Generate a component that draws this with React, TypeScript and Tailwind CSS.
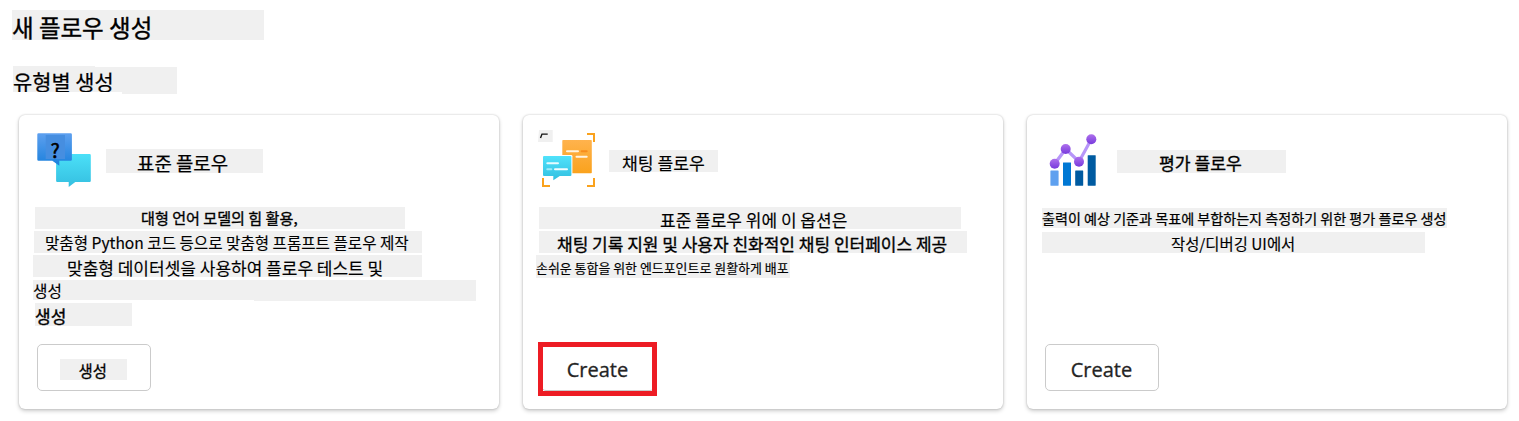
import type { ReactNode } from "react";

function Strip({ className, children }: { className: string; children?: ReactNode }) {
  return <div className={`whitespace-pre bg-[#f0f0f0] text-black ${className}`}>{children}</div>;
}

function StandardIcon() {
  return (
    <svg width="54" height="54" viewBox="0 0 54 54" className="block shrink-0">
      <defs>
        <linearGradient id="std-blue" x1="0" y1="0" x2="0" y2="1">
          <stop offset="0" stopColor="#5ea0ef" />
          <stop offset="1" stopColor="#1b80dc" />
        </linearGradient>
        <linearGradient id="std-cyan" x1="0" y1="0" x2="0" y2="1">
          <stop offset="0" stopColor="#4be0f8" />
          <stop offset="1" stopColor="#35bfe0" />
        </linearGradient>
      </defs>
      <path
        d="M20.3 21h32.3q1.2 0 1.2 1.2v25.6q0 1.2-1.2 1.2H38.3l-6.6 5V49H20.3q-1.2 0-1.2-1.2V22.2q0-1.2 1.2-1.2z"
        fill="url(#std-cyan)"
      />
      <path
        d="M1.5.2h32.2q1.2 0 1.2 1.2v25.2q0 1.2-1.2 1.2H22.3v5l-7-5H1.5q-1.2 0-1.2-1.2V1.4Q.3.2 1.5.2z"
        fill="url(#std-blue)"
      />
      <rect x="8.7" y="2" width="19.3" height="24" fill="#468ee0" />
      <text
        x="18"
        y="24.700"
        textAnchor="middle"
        fontSize="19.500"
        stroke="#000"
        strokeWidth="0.500"
        fontFamily="Noto Sans CJK KR, sans-serif"
      >
        ?
      </text>
    </svg>
  );
}

function ChatIcon() {
  return (
    <svg width="58" height="58" viewBox="0 0 58 58" className="block shrink-0">
      <defs>
        <linearGradient id="chat-orange" x1="0" y1="0" x2="0" y2="1">
          <stop offset="0" stopColor="#ffb34d" />
          <stop offset="1" stopColor="#faa21d" />
        </linearGradient>
        <linearGradient id="chat-cyan" x1="0" y1="0" x2="0" y2="1">
          <stop offset="0" stopColor="#50e2fb" />
          <stop offset="1" stopColor="#32bfe0" />
        </linearGradient>
      </defs>
      <path d="M1 0h13.700v12H0z" fill="#f0f0f0" />
      <path d="M2.500 8L4 4.100h5.700" fill="none" stroke="#111" strokeWidth="1.400" />
      <path d="M49 4h7v8M5 48v8h7M56 48v8h-7" fill="none" stroke="#faa21d" strokeWidth="2" />
      <rect x="24.3" y="10" width="29.5" height="33.2" rx="0.8" fill="url(#chat-orange)" />
      <rect x="4" y="25" width="30.4" height="22.2" rx="1.2" fill="#fff" />
      <path
        d="M6 26h26.400q1 0 1 1v18q0 1-1 1H21.800l-6.500 4.200V46H6q-1 0-1-1V27q0-1 1-1z"
        fill="url(#chat-cyan)"
      />
      <g strokeWidth="2" strokeLinecap="round" fill="none">
        <path d="M29 21.200h11" stroke="#fff3e0" />
        <path d="M43.700 21.200h5" stroke="#f78d1e" />
        <path d="M38.500 26.800h10.200" stroke="#fff3e0" />
        <path d="M9.300 33.200h10.700" stroke="#e6fbff" />
        <path d="M9.300 39.200h4" stroke="#9cebf8" />
        <path d="M17 39.200h12" stroke="#f2fdff" />
      </g>
    </svg>
  );
}

function EvaluationIcon() {
  return (
    <svg width="49" height="52" viewBox="0 0 49 52" className="block shrink-0">
      <defs>
        <linearGradient id="node" x1="0" y1="0" x2="0" y2="1">
          <stop offset="0" stopColor="#ae70ec" />
          <stop offset="1" stopColor="#773adc" />
        </linearGradient>
      </defs>
      <rect x="1.400" y="36.500" width="8.200" height="15.200" rx="0.400" fill="#5ea0ef" />
      <rect x="14" y="28.400" width="8" height="23.300" rx="0.400" fill="#0078d4" />
      <rect x="26.200" y="36.500" width="8" height="15.200" rx="0.400" fill="#005ba1" />
      <rect x="38.700" y="21.200" width="8" height="30.500" rx="0.400" fill="#005ba1" />
      <path d="M5.700 29.700L16.700 15 30 27.700 42.300 5.300" fill="none" stroke="#b796f9" strokeWidth="3.200" />
      <circle cx="5.700" cy="29.700" r="5" fill="url(#node)" />
      <circle cx="16.700" cy="15" r="5" fill="url(#node)" />
      <circle cx="30" cy="27.700" r="5" fill="url(#node)" />
      <circle cx="42.300" cy="5.300" r="5" fill="url(#node)" />
    </svg>
  );
}

function Card({ children }: { children: ReactNode }) {
  return (
    <section className="flex h-[294px] w-[480px] shrink-0 flex-col rounded-md bg-white shadow-[0_0_2px_rgba(0,0,0,0.22),0_2px_4px_rgba(0,0,0,0.2)]">
      {children}
    </section>
  );
}

function CreateButton({ children }: { children: ReactNode }) {
  return (
    <button className="flex h-[47px] w-[114px] justify-center rounded-[5px] border border-[#cbcbcb] bg-white pr-px font-['Open_Sans','Noto_Sans',sans-serif] text-[20px] leading-[49px] text-[#242424] [-webkit-text-stroke:0.3px]">
      {children}
    </button>
  );
}

export default function App() {
  return (
    <main className="h-[421px] w-[1519px] overflow-hidden bg-white pt-[10px] font-['Noto_Sans_CJK_KR',sans-serif] [-webkit-text-stroke:0.15px]">
      <h1 className="ml-3">
        <Strip className="h-[30px] w-[252px] text-[23.5px] leading-[34px] [-webkit-text-stroke:0.4px]">
          새 플로우 생성
        </Strip>
      </h1>
      <h2 className="mt-[26px] ml-[13px]">
        <Strip className="h-[28px] w-[164px] text-[20.9px] leading-[30px] [-webkit-text-stroke:0.25px] [clip-path:polygon(0_0,82px_0,82px_1px,164px_1px,164px_28px,109px_28px,109px_26px,0_26px)]">
          유형별 생성
        </Strip>
      </h2>

      <div className="mt-[21px] ml-[19px] flex gap-6">
        <Card>
          <header className="flex h-[92px] pt-[18px] pl-[18px]">
            <StandardIcon />
            <Strip className="mt-4 ml-[15px] h-6 w-[157px] pl-[31px] text-[18.9px] leading-[28px] [-webkit-text-stroke:0.25px]">
              표준 플로우
            </Strip>
          </header>
          <div className="flex h-[137px] flex-col gap-[2px] pl-[14px]">
            <Strip className="ml-[2px] h-[22px] w-[370px] pl-[106px] text-[15.1px] leading-[20px] [-webkit-text-stroke:0.35px]">
              대형 언어 모델의 힘 활용,
            </Strip>
            <Strip className="ml-px h-[22px] w-[388px] pl-[11px] text-[15.6px] leading-[22px]">
              맞춤형 Python 코드 등으로 맞춤형 프롬프트 플로우 제작
            </Strip>
            <Strip className="h-[22px] w-[389px] pl-[34px] text-[17px] leading-[26px]">
              맞춤형 데이터셋을 사용하여 플로우 테스트 및
            </Strip>
            <Strip className="mt-px h-[21px] w-[443px] text-[15.7px] leading-[21px] [clip-path:polygon(0_0,100%_0,100%_100%,221px_100%,221px_20px,0_20px)]">
              생성
            </Strip>
            <Strip className="ml-[2px] h-[23px] w-[97px] text-[17px] leading-[25px] [-webkit-text-stroke:0.4px]">생성</Strip>
          </div>
          <div className="pl-[18px]">
            <CreateButton>
              <Strip className="mt-[14px] mr-px h-[21px] w-[67px] pl-[19px] text-left font-['Noto_Sans_CJK_KR',sans-serif] text-[15.5px] leading-[23px]">
                생성
              </Strip>
            </CreateButton>
          </div>
        </Card>

        <Card>
          <header className="flex h-[92px] pt-[15px] pl-[15px]">
            <ChatIcon />
            <Strip className="mt-5 ml-[13px] h-[22px] w-[109px] pl-[13px] text-[17.2px] leading-[26px]">채팅 플로우</Strip>
          </header>
          <div className="flex h-[137px] flex-col gap-[2px] pl-[13px]">
            <Strip className="ml-[3px] h-[22px] w-[422px] pl-[121px] text-[17px] leading-[26px]">
              표준 플로우 위에 이 옵션은
            </Strip>
            <Strip className="ml-[3px] h-[22px] w-[428px] pl-[18px] text-[17px] leading-[25px] [-webkit-text-stroke:0.35px]">
              채팅 기록 지원 및 사용자 친화적인 채팅 인터페이스 제공
            </Strip>
            <Strip className="h-[23px] w-[254px] text-[12.95px] leading-[25px]">
              손쉬운 통합을 위한 엔드포인트로 원활하게 배포
            </Strip>
          </div>
          <div className="pl-[18px]">
            <div className="-mt-[2px] -ml-[3px] h-[54px] w-[119px] overflow-hidden border-[5px] border-[#ed1c24]">
              <div className="-mt-[3px] -ml-[2px]">
                <CreateButton>Create</CreateButton>
              </div>
            </div>
          </div>
        </Card>

        <Card>
          <header className="flex h-[93px] pt-[19px] pl-[22px]">
            <EvaluationIcon />
            <Strip className="mt-4 ml-[19px] h-[23px] w-[169px] pl-[42px] text-[17.2px] leading-[26px] [-webkit-text-stroke:0.35px]">
              평가 플로우
            </Strip>
          </header>
          <div className="flex h-[136px] flex-col gap-1 pl-[15px]">
            <Strip className="h-5 w-[405px] text-[14.1px] leading-[20px] [-webkit-text-stroke:0.25px]">
              출력이 예상 기준과 목표에 부합하는지 측정하기 위한 평가 플로우 생성
            </Strip>
            <Strip className="h-[21px] w-[383px] pl-[129px] text-[15.4px] leading-[22px]">작성/디버깅 UI에서</Strip>
          </div>
          <div className="pl-[18px]">
            <CreateButton>Create</CreateButton>
          </div>
        </Card>
      </div>
    </main>
  );
}
